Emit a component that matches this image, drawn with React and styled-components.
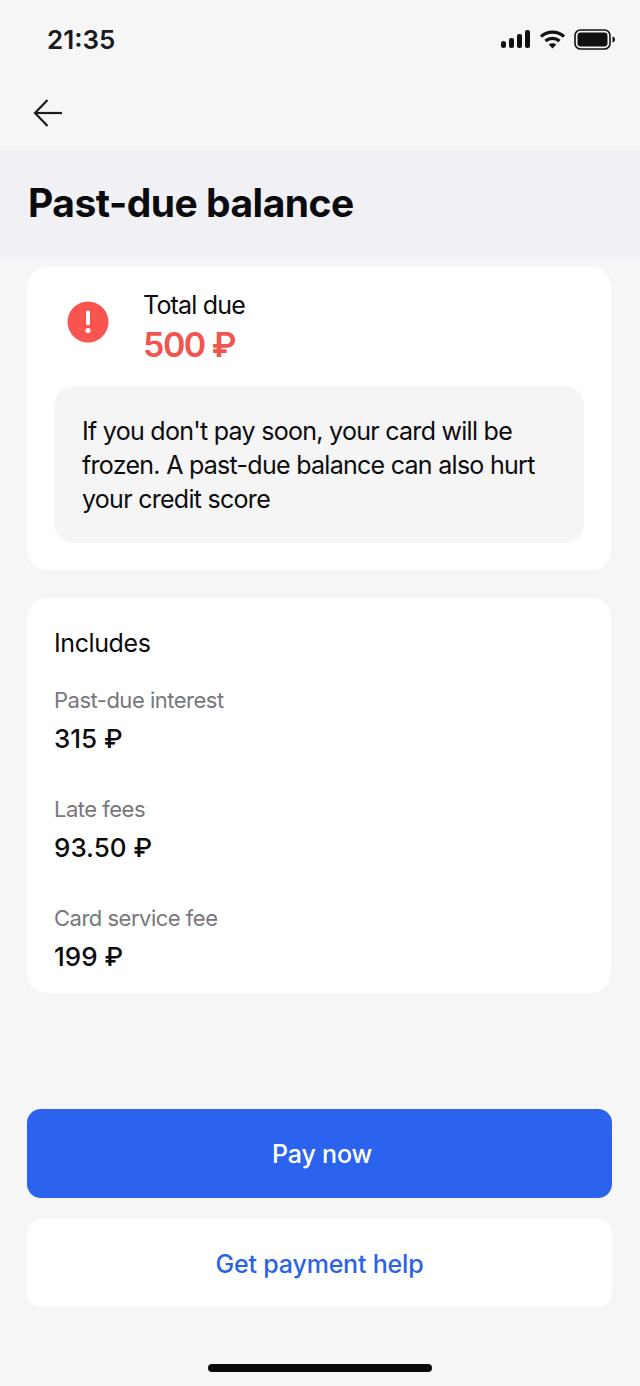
import React from "react"
import styled, { createGlobalStyle } from "styled-components"

const items = [
  { label: "Past-due interest", value: "315 ₽" },
  { label: "Late fees", value: "93.50 ₽" },
  { label: "Card service fee", value: "199 ₽" }
]

function SignalIcon() {
  return (
    <svg width="30" height="18" viewBox="0 0 30 18" fill="#111">
      <rect x="0" y="11" width="5" height="7" rx="2.5" />
      <rect x="8" y="8" width="5" height="10" rx="2" />
      <rect x="16" y="4" width="5" height="14" rx="2" />
      <rect x="24" y="0" width="5" height="18" rx="2" />
    </svg>
  )
}

function WifiIcon() {
  return (
    <svg width="27" height="19" viewBox="0 0 26 19" fill="none" stroke="#111" strokeWidth="3.2">
      <path d="M1.5 6.5 C8 0.7 18 0.7 24.5 6.5" />
      <path d="M6 11 C10 7.4 16 7.4 20 11" />
      <path d="M13 18.5 L9.2 14.6 C11.4 12.8 14.6 12.8 16.8 14.6 Z" fill="#111" stroke="none" />
    </svg>
  )
}

function BatteryIcon() {
  return (
    <svg width="42" height="21" viewBox="0 0 42 21" fill="none">
      <rect x="1" y="1" width="35" height="19" rx="5.5" stroke="#111" strokeWidth="1.6" />
      <rect x="3.5" y="3.5" width="30" height="14" rx="3.2" fill="#111" />
      <path d="M38.5 7.5 C40.5 8 41 9.2 41 10.5 C41 11.8 40.5 13 38.5 13.5 Z" fill="#111" />
    </svg>
  )
}

function BackArrow() {
  return (
    <svg width="30" height="30" viewBox="0 0 30 30" fill="none" stroke="#1b1b1f" strokeWidth="2.2">
      <path d="M2 15 H29" />
      <path d="M14.5 2 L2 15 L14.5 28" />
    </svg>
  )
}

function AlertIcon() {
  return (
    <svg width="42" height="42" viewBox="0 0 42 42">
      <circle cx="21" cy="21" r="20.5" fill="#f9544f" />
      <rect x="19" y="9.5" width="4" height="15" rx="2" fill="#fff" />
      <circle cx="21" cy="29.5" r="2.6" fill="#fff" />
    </svg>
  )
}

export default function App() {
  return (
    <Page>
      <GlobalStyle />
      <StatusBar>
        <Time>21:35</Time>
        <StatusIcons>
          <SignalIcon />
          <WifiIcon />
          <BatteryIcon />
        </StatusIcons>
      </StatusBar>
      <NavBar>
        <BackArrow />
      </NavBar>
      <Header>
        <Title>Past-due balance</Title>
      </Header>
      <Content>
        <Card>
          <TotalRow>
            <AlertSlot>
              <AlertIcon />
            </AlertSlot>
            <div>
              <TotalLabel>Total due</TotalLabel>
              <TotalAmount>500 ₽</TotalAmount>
            </div>
          </TotalRow>
          <Notice>
            If you don't pay soon, your card will be frozen. A past-due balance can also hurt your credit score
          </Notice>
        </Card>
        <BreakdownCard>
          <BreakdownTitle>Includes</BreakdownTitle>
          <BreakdownList>
            {items.map((item) => (
              <div key={item.label}>
                <ItemLabel>{item.label}</ItemLabel>
                <ItemValue>{item.value}</ItemValue>
              </div>
            ))}
          </BreakdownList>
        </BreakdownCard>
      </Content>
      <Actions>
        <ActionButton $primary>Pay now</ActionButton>
        <ActionButton>Get payment help</ActionButton>
      </Actions>
      <HomeBar>
        <HomeIndicator />
      </HomeBar>
    </Page>
  )
}

const GlobalStyle = createGlobalStyle`
  * {
    box-sizing: border-box;
  }
  body {
    margin: 0;
    background: #f6f6f7;
    font-family: Inter, "Liberation Sans", sans-serif;
  }
`

const Page = styled.div`
  width: 640px;
  height: 1386px;
  display: flex;
  flex-direction: column;
  background: #f6f6f7;
  color: #0c0c0e;
`

const StatusBar = styled.div`
  height: 78px;
  padding: 0 24px 0 47px;
  display: flex;
  align-items: center;
  justify-content: space-between;
`

const Time = styled.div`
  font-size: 26px;
  font-weight: 600;
  color: #1a1a1c;
`

const StatusIcons = styled.div`
  display: flex;
  align-items: center;
  gap: 8px;
`

const NavBar = styled.div`
  height: 72px;
  padding: 0 0 2px 33px;
  display: flex;
  align-items: center;
`

const Header = styled.div`
  height: 110px;
  padding: 0 28px 6px;
  display: flex;
  align-items: center;
  background: #f1f1f5;
`

const Title = styled.h1`
  margin: 0;
  font-size: 39px;
  font-weight: 700;
  letter-spacing: -0.5px;
  color: #0b0b0d;
`

const Content = styled.div`
  padding: 7px 29px 0 27px;
  display: flex;
  flex-direction: column;
  gap: 28px;
`

const Card = styled.div`
  height: 303px;
  padding: 19px 27px 27px;
  display: flex;
  flex-direction: column;
  justify-content: space-between;
  background: #fff;
  border-radius: 20px;
`

const TotalRow = styled.div`
  display: flex;
`

const AlertSlot = styled.div`
  width: 90px;
  padding: 15px 0 0 13px;
`

const TotalLabel = styled.div`
  margin-left: -1px;
  font-size: 25px;
  line-height: 38px;
  letter-spacing: -0.8px;
`

const TotalAmount = styled.div`
  margin-left: -1px;
  font-size: 34px;
  line-height: 42px;
  font-weight: 600;
  letter-spacing: -1.5px;
  color: #f2544f;
`

const Notice = styled.div`
  height: 157px;
  padding: 28px 28px 0;
  font-size: 25px;
  line-height: 34px;
  letter-spacing: -0.72px;
  background: #f5f5f6;
  border-radius: 20px;
`

const BreakdownCard = styled.div`
  height: 395px;
  padding: 26px 27px 0 28px;
  background: #fff;
  border-radius: 20px;
`

const BreakdownTitle = styled.div`
  margin-left: -1px;
  font-size: 25px;
  line-height: 38px;
  letter-spacing: -0.4px;
`

const BreakdownList = styled.div`
  margin-top: 22px;
  margin-left: -1px;
  display: flex;
  flex-direction: column;
  gap: 35px;
`

const ItemLabel = styled.div`
  font-size: 22px;
  line-height: 32px;
  letter-spacing: -0.5px;
  color: #77777c;
`

const ItemValue = styled.div`
  margin-top: 4px;
  font-size: 26px;
  line-height: 38px;
  font-weight: 500;
`

const Actions = styled.div`
  margin-top: 116px;
  padding: 0 28px 0 27px;
  display: flex;
  flex-direction: column;
  gap: 21px;
`

const ActionButton = styled.button`
  height: 88.5px;
  padding: 2px 0 0 ${(p) => (p.$primary ? "5px" : "0")};
  border: 0;
  border-radius: 14px;
  font-family: inherit;
  font-size: 25px;
  font-weight: 500;
  letter-spacing: -0.2px;
  color: ${(p) => (p.$primary ? "#fff" : "#2b63e6")};
  background: ${(p) => (p.$primary ? "#2b63ee" : "#fff")};
`

const HomeBar = styled.div`
  margin-top: 57px;
  display: flex;
  justify-content: center;
`

const HomeIndicator = styled.div`
  width: 224px;
  height: 8px;
  border-radius: 4px;
  background: #0b0b0d;
`
